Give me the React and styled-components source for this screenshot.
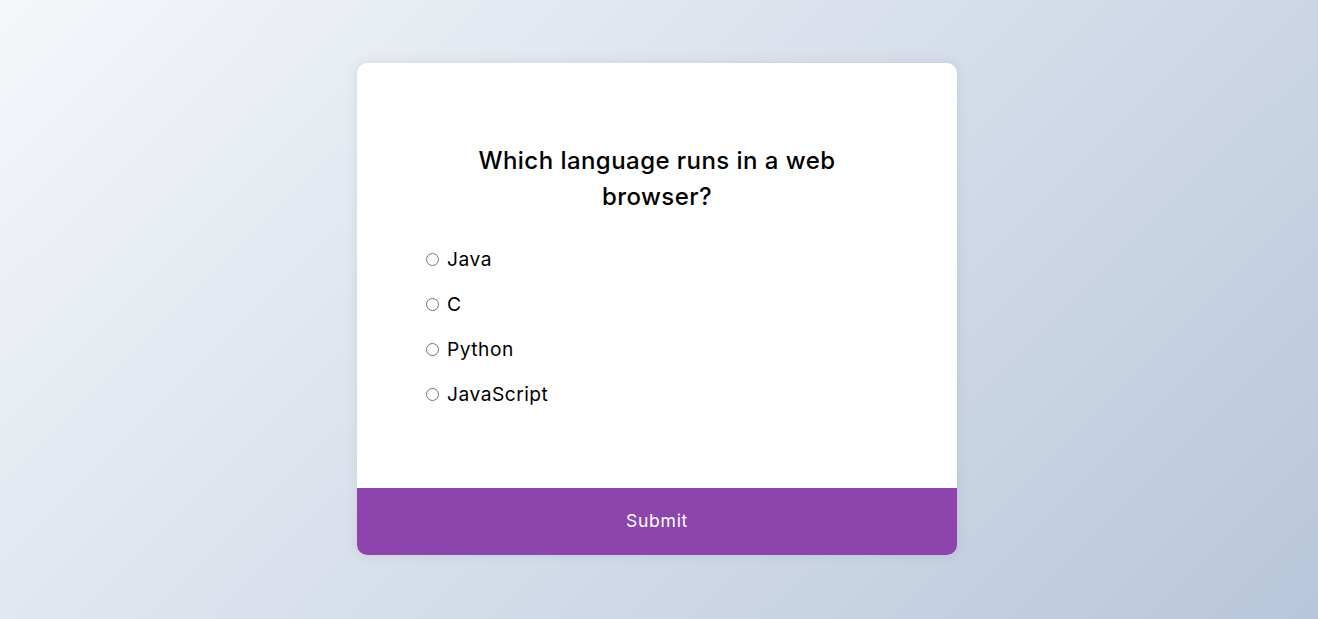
import React, { useState } from "react";
import styled, { createGlobalStyle } from "styled-components";

const GlobalStyle = createGlobalStyle`
  * {
    box-sizing: border-box;
  }
  body {
    margin: 0;
    font-family: Inter, "Open Sans", sans-serif;
    background: linear-gradient(135deg, #f5f7fa 0%, #b8c6db 100%);
  }
`;

const Page = styled.div`
    display: flex;
    align-items: center;
    justify-content: center;
    height: 100vh;
    padding: 0 4px 1px 0;
    overflow: hidden;
  `,
  Card = styled.div`
    background: #fff;
    width: 600px;
    border-radius: 10px;
    box-shadow: 0 0 10px 2px rgba(100, 100, 100, 0.1);
    overflow: hidden;
  `,
  Header = styled.div`
    padding: 64px;
  `,
  Question = styled.h2`
    margin: 0;
    padding: 16px;
    text-align: center;
    font-size: 24px;
    font-weight: 500;
    line-height: 36px;
    color: #000;
    letter-spacing: 0.45px;
  `,
  Answers = styled.ul`
    list-style: none;
    padding: 0;
    margin: 14px 0 15px;
  `,
  Answer = styled.li`
    display: flex;
    align-items: center;
    font-size: 19.2px;
    line-height: 28.8px;
    margin: 16.2px 0;
    color: #000;
    letter-spacing: 0.5px;

    &:first-child {
      margin-top: 0;
    }
    &:last-child {
      margin-bottom: 0;
    }
  `,
  Radio = styled.input`
    width: 13px;
    height: 13px;
    margin: 0 8px 0 5px;
  `,
  Submit = styled.button`
    display: block;
    width: 100%;
    border: none;
    background: #8e44ad;
    color: #fff;
    font-family: inherit;
    font-size: 17.6px;
    line-height: 26.4px;
    letter-spacing: 0.7px;
    padding: 20.3px;
    cursor: pointer;
  `;

const options = ["Java", "C", "Python", "JavaScript"];

export default function App() {
  const [picked, setPicked] = useState(null);
  return (
    <Page>
      <GlobalStyle />
      <Card>
        <Header>
          <Question>
            Which language runs in a web
            <br />
            browser?
          </Question>
          <Answers>
            {options.map((o, i) => (
              <Answer key={o}>
                <Radio
                  type="radio"
                  name="answer"
                  id={"opt" + i}
                  checked={picked === i}
                  onChange={() => setPicked(i)}
                />
                <label htmlFor={"opt" + i}>{o}</label>
              </Answer>
            ))}
          </Answers>
        </Header>
        <Submit>Submit</Submit>
      </Card>
    </Page>
  );
}
